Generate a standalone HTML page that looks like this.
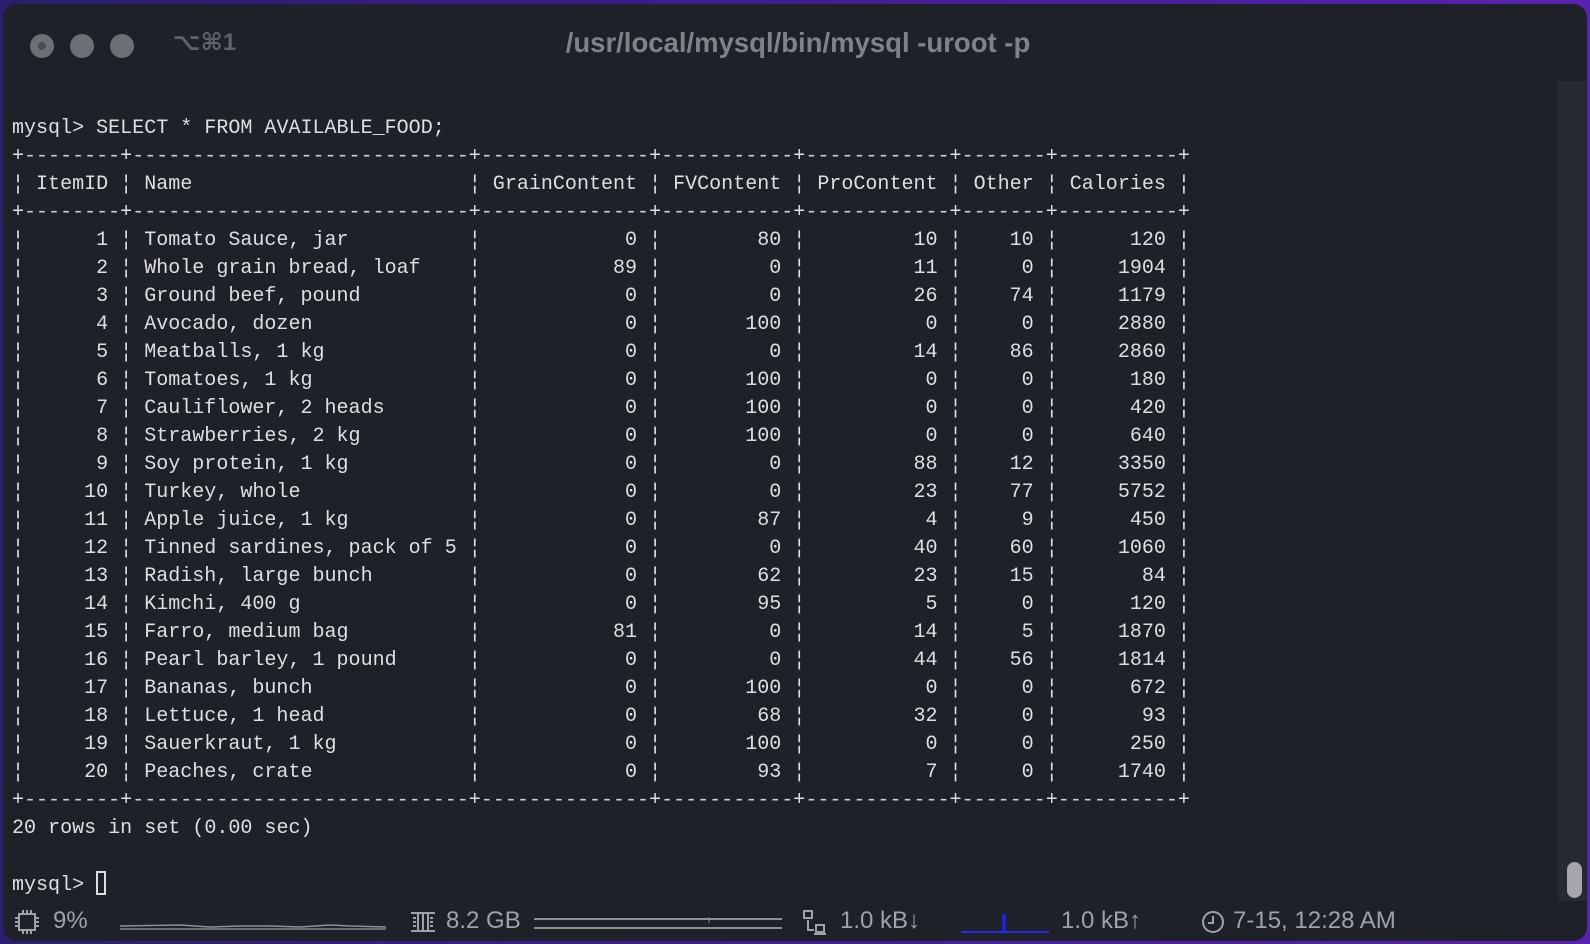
<!DOCTYPE html>
<html><head><meta charset="utf-8"><style>
html,body{margin:0;padding:0;width:1590px;height:944px;overflow:hidden;background:linear-gradient(90deg,#2a1f6e 0%,#3a1d8a 40%,#5a22b0 100%);}
#win{position:absolute;left:3px;top:4px;width:1584px;height:937px;background:#1e2228;border-radius:14px;overflow:hidden;}
.tl{position:absolute;top:30px;width:24px;height:24px;border-radius:50%;background:#6c6f73;}
.tl i{position:absolute;left:8px;top:8px;width:8px;height:8px;border-radius:50%;background:#4a4d51;}
#kbd{position:absolute;left:170px;top:24px;font:bold 24px "Liberation Sans","DejaVu Sans",sans-serif;color:#5f6266;}
#title{position:absolute;left:0;width:1590px;top:23px;text-align:center;font:bold 27.5px "Liberation Sans",sans-serif;color:#7f8286;}
#term{position:absolute;left:12px;top:115px;font-family:"Liberation Mono",monospace;font-size:20.05px;line-height:28px;color:#dedfe0;white-space:pre;}
.r{height:28px;white-space:nowrap}
.r span{display:inline-block;box-sizing:border-box;padding:0 1ch;overflow:hidden;vertical-align:top;white-space:pre}
.r s{text-decoration:none;display:inline-block;width:1ch;text-align:center;vertical-align:top}
.a{width:8ch;text-align:right}.b{width:28ch;text-align:left}.c{width:14ch;text-align:right}.d{width:11ch;text-align:right}.e{width:12ch;text-align:right}.f{width:7ch;text-align:right}.g{width:10ch;text-align:right}
.r span.x{padding:0;color:#cfd0d2}
#sb{position:absolute;left:1555px;top:77px;width:32px;height:820px;background:#262a30;}
#thumb{position:absolute;left:1564px;top:858px;width:15px;height:36px;border-radius:8px;background:#a4a6a9;}
#status{position:absolute;top:906px;left:0;width:1590px;height:30px;font:24px "Liberation Sans",sans-serif;color:#9fa2a6;}
#status div{position:absolute;top:0;line-height:30px}
</style></head><body>
<div id="win">
<div class="tl" style="left:27px"><i></i></div>
<div class="tl" style="left:67px"></div>
<div class="tl" style="left:107px"></div>
<div id="kbd">⌥⌘1</div>
<div id="title">/usr/local/mysql/bin/mysql -uroot -p</div>
<div id="sb"></div><div id="thumb"></div>
</div>
<div id="term"><div class="r">mysql&gt; SELECT * FROM AVAILABLE_FOOD;</div><div class="r"><s>+</s><span class="a x">------------------------------</span><s>+</s><span class="b x">------------------------------</span><s>+</s><span class="c x">------------------------------</span><s>+</s><span class="d x">------------------------------</span><s>+</s><span class="e x">------------------------------</span><s>+</s><span class="f x">------------------------------</span><s>+</s><span class="g x">------------------------------</span><s>+</s></div><div class="r"><s>¦</s><span class="a">ItemID</span><s>¦</s><span class="b">Name</span><s>¦</s><span class="c">GrainContent</span><s>¦</s><span class="d">FVContent</span><s>¦</s><span class="e">ProContent</span><s>¦</s><span class="f">Other</span><s>¦</s><span class="g">Calories</span><s>¦</s></div><div class="r"><s>+</s><span class="a x">------------------------------</span><s>+</s><span class="b x">------------------------------</span><s>+</s><span class="c x">------------------------------</span><s>+</s><span class="d x">------------------------------</span><s>+</s><span class="e x">------------------------------</span><s>+</s><span class="f x">------------------------------</span><s>+</s><span class="g x">------------------------------</span><s>+</s></div><div class="r"><s>¦</s><span class="a">1</span><s>¦</s><span class="b">Tomato Sauce, jar</span><s>¦</s><span class="c">0</span><s>¦</s><span class="d">80</span><s>¦</s><span class="e">10</span><s>¦</s><span class="f">10</span><s>¦</s><span class="g">120</span><s>¦</s></div><div class="r"><s>¦</s><span class="a">2</span><s>¦</s><span class="b">Whole grain bread, loaf</span><s>¦</s><span class="c">89</span><s>¦</s><span class="d">0</span><s>¦</s><span class="e">11</span><s>¦</s><span class="f">0</span><s>¦</s><span class="g">1904</span><s>¦</s></div><div class="r"><s>¦</s><span class="a">3</span><s>¦</s><span class="b">Ground beef, pound</span><s>¦</s><span class="c">0</span><s>¦</s><span class="d">0</span><s>¦</s><span class="e">26</span><s>¦</s><span class="f">74</span><s>¦</s><span class="g">1179</span><s>¦</s></div><div class="r"><s>¦</s><span class="a">4</span><s>¦</s><span class="b">Avocado, dozen</span><s>¦</s><span class="c">0</span><s>¦</s><span class="d">100</span><s>¦</s><span class="e">0</span><s>¦</s><span class="f">0</span><s>¦</s><span class="g">2880</span><s>¦</s></div><div class="r"><s>¦</s><span class="a">5</span><s>¦</s><span class="b">Meatballs, 1 kg</span><s>¦</s><span class="c">0</span><s>¦</s><span class="d">0</span><s>¦</s><span class="e">14</span><s>¦</s><span class="f">86</span><s>¦</s><span class="g">2860</span><s>¦</s></div><div class="r"><s>¦</s><span class="a">6</span><s>¦</s><span class="b">Tomatoes, 1 kg</span><s>¦</s><span class="c">0</span><s>¦</s><span class="d">100</span><s>¦</s><span class="e">0</span><s>¦</s><span class="f">0</span><s>¦</s><span class="g">180</span><s>¦</s></div><div class="r"><s>¦</s><span class="a">7</span><s>¦</s><span class="b">Cauliflower, 2 heads</span><s>¦</s><span class="c">0</span><s>¦</s><span class="d">100</span><s>¦</s><span class="e">0</span><s>¦</s><span class="f">0</span><s>¦</s><span class="g">420</span><s>¦</s></div><div class="r"><s>¦</s><span class="a">8</span><s>¦</s><span class="b">Strawberries, 2 kg</span><s>¦</s><span class="c">0</span><s>¦</s><span class="d">100</span><s>¦</s><span class="e">0</span><s>¦</s><span class="f">0</span><s>¦</s><span class="g">640</span><s>¦</s></div><div class="r"><s>¦</s><span class="a">9</span><s>¦</s><span class="b">Soy protein, 1 kg</span><s>¦</s><span class="c">0</span><s>¦</s><span class="d">0</span><s>¦</s><span class="e">88</span><s>¦</s><span class="f">12</span><s>¦</s><span class="g">3350</span><s>¦</s></div><div class="r"><s>¦</s><span class="a">10</span><s>¦</s><span class="b">Turkey, whole</span><s>¦</s><span class="c">0</span><s>¦</s><span class="d">0</span><s>¦</s><span class="e">23</span><s>¦</s><span class="f">77</span><s>¦</s><span class="g">5752</span><s>¦</s></div><div class="r"><s>¦</s><span class="a">11</span><s>¦</s><span class="b">Apple juice, 1 kg</span><s>¦</s><span class="c">0</span><s>¦</s><span class="d">87</span><s>¦</s><span class="e">4</span><s>¦</s><span class="f">9</span><s>¦</s><span class="g">450</span><s>¦</s></div><div class="r"><s>¦</s><span class="a">12</span><s>¦</s><span class="b">Tinned sardines, pack of 5</span><s>¦</s><span class="c">0</span><s>¦</s><span class="d">0</span><s>¦</s><span class="e">40</span><s>¦</s><span class="f">60</span><s>¦</s><span class="g">1060</span><s>¦</s></div><div class="r"><s>¦</s><span class="a">13</span><s>¦</s><span class="b">Radish, large bunch</span><s>¦</s><span class="c">0</span><s>¦</s><span class="d">62</span><s>¦</s><span class="e">23</span><s>¦</s><span class="f">15</span><s>¦</s><span class="g">84</span><s>¦</s></div><div class="r"><s>¦</s><span class="a">14</span><s>¦</s><span class="b">Kimchi, 400 g</span><s>¦</s><span class="c">0</span><s>¦</s><span class="d">95</span><s>¦</s><span class="e">5</span><s>¦</s><span class="f">0</span><s>¦</s><span class="g">120</span><s>¦</s></div><div class="r"><s>¦</s><span class="a">15</span><s>¦</s><span class="b">Farro, medium bag</span><s>¦</s><span class="c">81</span><s>¦</s><span class="d">0</span><s>¦</s><span class="e">14</span><s>¦</s><span class="f">5</span><s>¦</s><span class="g">1870</span><s>¦</s></div><div class="r"><s>¦</s><span class="a">16</span><s>¦</s><span class="b">Pearl barley, 1 pound</span><s>¦</s><span class="c">0</span><s>¦</s><span class="d">0</span><s>¦</s><span class="e">44</span><s>¦</s><span class="f">56</span><s>¦</s><span class="g">1814</span><s>¦</s></div><div class="r"><s>¦</s><span class="a">17</span><s>¦</s><span class="b">Bananas, bunch</span><s>¦</s><span class="c">0</span><s>¦</s><span class="d">100</span><s>¦</s><span class="e">0</span><s>¦</s><span class="f">0</span><s>¦</s><span class="g">672</span><s>¦</s></div><div class="r"><s>¦</s><span class="a">18</span><s>¦</s><span class="b">Lettuce, 1 head</span><s>¦</s><span class="c">0</span><s>¦</s><span class="d">68</span><s>¦</s><span class="e">32</span><s>¦</s><span class="f">0</span><s>¦</s><span class="g">93</span><s>¦</s></div><div class="r"><s>¦</s><span class="a">19</span><s>¦</s><span class="b">Sauerkraut, 1 kg</span><s>¦</s><span class="c">0</span><s>¦</s><span class="d">100</span><s>¦</s><span class="e">0</span><s>¦</s><span class="f">0</span><s>¦</s><span class="g">250</span><s>¦</s></div><div class="r"><s>¦</s><span class="a">20</span><s>¦</s><span class="b">Peaches, crate</span><s>¦</s><span class="c">0</span><s>¦</s><span class="d">93</span><s>¦</s><span class="e">7</span><s>¦</s><span class="f">0</span><s>¦</s><span class="g">1740</span><s>¦</s></div><div class="r"><s>+</s><span class="a x">------------------------------</span><s>+</s><span class="b x">------------------------------</span><s>+</s><span class="c x">------------------------------</span><s>+</s><span class="d x">------------------------------</span><s>+</s><span class="e x">------------------------------</span><s>+</s><span class="f x">------------------------------</span><s>+</s><span class="g x">------------------------------</span><s>+</s></div><div class="r">20 rows in set (0.00 sec)</div><div class="r"> </div><div class="r">mysql&gt; <span style="display:inline-block;width:10px;height:24px;border:2px solid #dedfe0;box-sizing:border-box;vertical-align:-5px;padding:0"></span></div></div>
<div id="status">
<svg style="position:absolute;left:14px;top:3px" width="26" height="26" viewBox="0 0 26 26" fill="none" stroke="#9fa2a6" stroke-width="2"><rect x="5" y="5" width="16" height="16"/><path d="M9 1v4M13 1v4M17 1v4M9 21v4M13 21v4M17 21v4M1 9h4M1 13h4M1 17h4M21 9h4M21 13h4M21 17h4"/></svg>
<div style="left:53px">9%</div>
<svg style="position:absolute;left:120px;top:12px" width="266" height="14"><path d="M0 8 L60 7 L90 9 L120 8 L150 8 L180 9 L210 7 L230 8 L266 9" stroke="#8c8f93" stroke-width="1.5" fill="none"/><path d="M0 11H266" stroke="#6a6d70" stroke-width="2"/></svg>
<svg style="position:absolute;left:410px;top:5px" width="26" height="22" fill="none" stroke="#9fa2a6" stroke-width="2"><path d="M1 2h24M1 20h24M8 2v18M13 2v18M18 2v18M3 7h3M3 11h3M3 15h3M20 7h3M20 11h3M20 15h3"/></svg>
<div style="left:446px">8.2 GB</div>
<svg style="position:absolute;left:534px;top:10px" width="248" height="14"><path d="M0 3H248M0 12H248" stroke="#8c8f93" stroke-width="2"/><path d="M175 1v6" stroke="#8c8f93"/></svg>
<svg style="position:absolute;left:802px;top:4px" width="26" height="26" fill="none" stroke="#9fa2a6" stroke-width="2"><rect x="2" y="1" width="8" height="7"/><rect x="14" y="15" width="8" height="7"/><path d="M6 10v10h6M12 24h12"/></svg>
<div style="left:840px">1.0 kB↓</div>
<svg style="position:absolute;left:961px;top:0" width="88" height="30"><path d="M0 26H88" stroke="#2a2ae0" stroke-width="2"/><path d="M43 8V26" stroke="#2020ff" stroke-width="3"/></svg>
<div style="left:1061px">1.0 kB↑</div>
<svg style="position:absolute;left:1201px;top:4px" width="24" height="24" fill="none" stroke="#9fa2a6" stroke-width="2"><circle cx="12" cy="12" r="10"/><path d="M12 6v7h-5"/></svg>
<div style="left:1233px">7-15, 12:28 AM</div>
</div>
</body></html>
